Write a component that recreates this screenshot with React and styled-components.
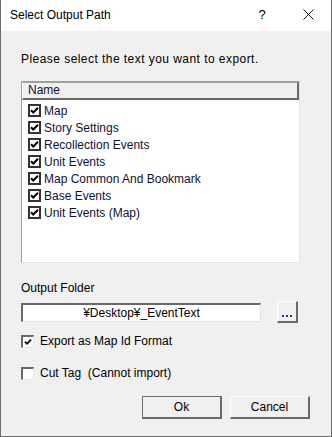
import React from "react";
import styled, { createGlobalStyle } from "styled-components";

const GlobalStyle = createGlobalStyle`
  html, body {
    margin: 0;
    padding: 0;
    background: #f0f0f0;
  }
  body {
    font-family: "Liberation Sans", Arial, sans-serif;
    font-size: 12px;
    color: #000;
  }
`;

const ITEMS = [
  "Map",
  "Story Settings",
  "Recollection Events",
  "Unit Events",
  "Map Common And Bookmark",
  "Base Events",
  "Unit Events (Map)",
];

const Window = styled.div`
  width: 332px;
  height: 437px;
  box-sizing: border-box;
  border-left: 1px solid #6d6d6d;
  border-right: 1px solid #6d6d6d;
  border-bottom: 1px solid #6d6d6d;
  background: #f0f0f0;
  display: flex;
  flex-direction: column;
`;

const TitleBar = styled.div`
  height: 31px;
  background: #fff;
  display: flex;
  align-items: center;
  padding-left: 9px;
  font-size: 12px;
`;

const TitleText = styled.div`
  flex: 1;
  padding-bottom: 2px;
`;

const TitleBtn = styled.div`
  width: ${(p) => p.$w}px;
  display: flex;
  align-items: center;
  justify-content: center;
  font-size: 13px;
  padding-bottom: 2px;
`;

const Body = styled.div`
  flex: 1;
  padding: 21px 31px 0 20px;
  display: flex;
  flex-direction: column;
`;

const Prompt = styled.div`
  height: 14px;
  line-height: 14px;
  margin-bottom: 15px;
  letter-spacing: 0.45px;
`;

const ListBox = styled.div`
  height: 182px;
  box-sizing: border-box;
  border-top: 1px solid #a0a0a0;
  border-left: 1px solid #a0a0a0;
  border-right: 1px solid #e3e3e3;
  border-bottom: 1px solid #e3e3e3;
  background: #fff;
`;

const Header = styled.div`
  height: 18px;
  box-sizing: border-box;
  background: #f0f0f0;
  border-top: 1px solid #a0a0a0;
  border-left: 1px solid #fff;
  border-bottom: 2px solid #696969;
  border-right: 2px solid #696969;
  padding-left: 5px;
  line-height: 15px;
  color: #10103a;
`;

const Rows = styled.div`
  padding: 2px 0 0 6px;
  display: flex;
  flex-direction: column;
`;

const Row = styled.div`
  height: 17px;
  display: flex;
  align-items: center;
  gap: 3px;
  color: #10103a;
`;

const ListCheck = styled.div`
  width: 13px;
  height: 13px;
  box-sizing: border-box;
  border: 2px solid #333;
  background: #fff;
  display: flex;
  align-items: center;
  justify-content: center;
`;

const Label = styled.div`
  margin-top: 18px;
  height: 14px;
  line-height: 14px;
`;

const FolderRow = styled.div`
  margin-top: 6px;
  display: flex;
  align-items: center;
  gap: 16px;
`;

const PathInput = styled.div`
  width: 240px;
  height: 19px;
  box-sizing: border-box;
  background: #fff;
  border-top: 2px solid #696969;
  border-left: 2px solid #696969;
  border-bottom: 1px solid #e3e3e3;
  border-right: 1px solid #e3e3e3;
  text-align: center;
  line-height: 16px;
`;

const SmallBtn = styled.div`
  width: 21px;
  height: 22px;
  box-sizing: border-box;
  background: #f0f0f0;
  border-top: 1px solid #fff;
  border-left: 1px solid #fff;
  border-bottom: 2px solid #696969;
  border-right: 2px solid #696969;
  display: flex;
  align-items: flex-end;
  justify-content: center;
  padding-bottom: 4px;
  gap: 2px;
`;

const Dot = styled.span`
  width: 2px;
  height: 2px;
  background: #1d3a8a;
`;

const CheckLine = styled.div`
  display: flex;
  align-items: center;
  gap: 6px;
  height: 14px;
  margin-top: ${(p) => p.$mt}px;
`;

const SunkenBox = styled.div`
  width: 13px;
  height: 13px;
  box-sizing: border-box;
  background: #fff;
  border-top: 2px solid #696969;
  border-left: 2px solid #696969;
  border-bottom: 1px solid #e3e3e3;
  border-right: 1px solid #e3e3e3;
  display: flex;
  align-items: center;
  justify-content: center;
`;

const ButtonRow = styled.div`
  margin-top: 16px;
  display: flex;
  justify-content: flex-end;
  gap: 8px;
  margin-right: -10px;
`;

const Button = styled.div`
  width: 80px;
  height: 23px;
  box-sizing: border-box;
  background: #f0f0f0;
  border-top: 1px solid ${(p) => (p.$default ? "#a0a0a0" : "#fff")};
  border-left: 1px solid ${(p) => (p.$default ? "#a0a0a0" : "#fff")};
  border-bottom: 2px solid #696969;
  border-right: 2px solid #696969;
  outline: ${(p) => (p.$default ? "1px solid #6d6d6d" : "none")};
  outline-offset: -1px;
  display: flex;
  align-items: center;
  justify-content: center;
`;

const Tick = ({ size = 9 }) => (
  <svg width={size} height={size} viewBox="0 0 9 9">
    <path d="M1 4.2 L3.3 6.5 L8 1.8" stroke="#000" strokeWidth="2" fill="none" />
  </svg>
);

const CloseIcon = () => (
  <svg width="11" height="11" viewBox="0 0 11 11">
    <path d="M0.5 0.5 L10.5 10.5 M10.5 0.5 L0.5 10.5" stroke="#111" strokeWidth="1" fill="none" />
  </svg>
);

export default function App() {
  return (
    <>
      <GlobalStyle />
      <Window>
        <TitleBar>
          <TitleText>Select Output Path</TitleText>
          <TitleBtn $w={46}>?</TitleBtn>
          <TitleBtn $w={46}>
            <CloseIcon />
          </TitleBtn>
        </TitleBar>
        <Body>
          <Prompt>Please select the text you want to export.</Prompt>
          <ListBox>
            <Header>Name</Header>
            <Rows>
              {ITEMS.map((item) => (
                <Row key={item}>
                  <ListCheck>
                    <Tick />
                  </ListCheck>
                  {item}
                </Row>
              ))}
            </Rows>
          </ListBox>
          <Label>Output Folder</Label>
          <FolderRow>
            <PathInput>¥Desktop¥_EventText</PathInput>
            <SmallBtn>
              <Dot />
              <Dot />
              <Dot />
            </SmallBtn>
          </FolderRow>
          <CheckLine $mt={11}>
            <SunkenBox>
              <Tick size={8} />
            </SunkenBox>
            Export as Map Id Format
          </CheckLine>
          <CheckLine $mt={18}>
            <SunkenBox />
            Cut Tag&nbsp; (Cannot import)
          </CheckLine>
          <ButtonRow>
            <Button $default>Ok</Button>
            <Button>Cancel</Button>
          </ButtonRow>
        </Body>
      </Window>
    </>
  );
}
